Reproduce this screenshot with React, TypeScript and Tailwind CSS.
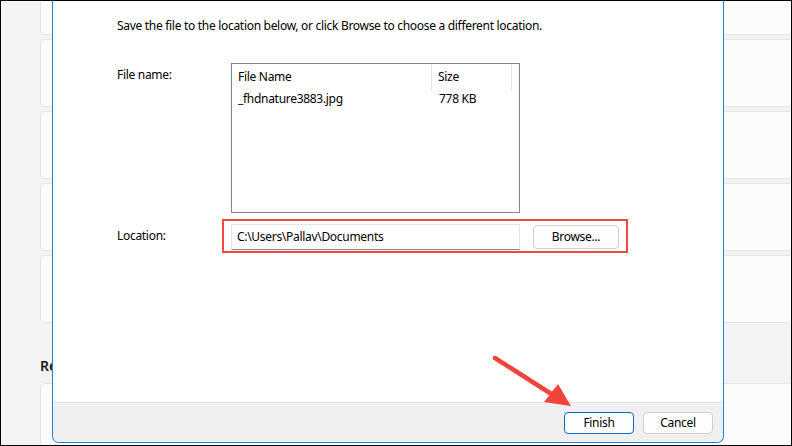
function BackgroundCards() {
  return (
    <div className="flex w-[820px] flex-col pl-[39px]">
      <div className="-mt-[34px] h-[68px] rounded-[5px] border border-[#e5e5e5] bg-[#fbfbfb]" />
      <div className="mt-[4px] h-[68px] rounded-[5px] border border-[#e5e5e5] bg-[#fbfbfb]" />
      <div className="mt-[4px] h-[68px] rounded-[5px] border border-[#e5e5e5] bg-[#fbfbfb]" />
      <div className="mt-[4px] h-[68px] rounded-[5px] border border-[#e5e5e5] bg-[#fbfbfb]" />
      <div className="mt-[4px] h-[68px] rounded-[5px] border border-[#e5e5e5] bg-[#fbfbfb]" />
      <div className="flex h-[60px] items-end pb-[7px] text-[14px] font-semibold leading-[20px] text-[#1b1b1b]">
        Related settings
      </div>
      <div className="h-[80px] rounded-[5px] border border-[#e5e5e5] bg-[#fbfbfb]" />
    </div>
  );
}

function FileList() {
  return (
    <div className="h-[150px] w-[289px] border border-[#82878f] bg-white">
      <div className="flex h-[26px] items-center">
        <div className="flex h-full w-[200px] items-center border-r border-[#e5e5e5] pl-[6px]">File Name</div>
        <div className="flex h-full w-[80px] items-center border-r border-[#e5e5e5] pl-[6px]">Size</div>
      </div>
      <div className="flex h-[18px] items-center">
        <div className="w-[201px] pl-[6px]">_fhdnature3883.jpg</div>
        <div className="pl-[6px]">778 KB</div>
      </div>
    </div>
  );
}

function SaveDialog() {
  return (
    <div className="absolute bottom-[2px] left-[51px] top-0 flex w-[672px] flex-col overflow-hidden rounded-b-[7px] border-x border-b border-[#1883d7] bg-white text-[12px] leading-[16px] tracking-[-0.3px] text-black">
      <div className="flex-1 pl-[64px] pt-[17px]">
        <p>Save the file to the location below, or click Browse to choose a different location.</p>

        <div className="mt-[29px] grid grid-cols-[114px_auto] items-start">
          <div className="pt-[4px]">File name:</div>
          <FileList />
        </div>

        <div className="mt-[6px] grid grid-cols-[114px_auto] items-center">
          <div>Location:</div>
          <div className="-ml-[9px] flex h-[34px] w-[406px] items-start border-2 border-[#f0483e] pl-[7px] pt-[3px]">
            <div className="flex h-[26px] w-[289px] items-center border border-[#e5e5e5] border-b-[#8a8a8a] bg-white pl-[5px]">
              C:\Users\Pallav\Documents
            </div>
            <button className="ml-[13px] mt-[1px] h-[24px] w-[86px] rounded-[4px] border border-[#d0d0d0] bg-[#fdfdfd]">
              Browse...
            </button>
          </div>
        </div>
      </div>

      <div className="flex h-[40px] items-center justify-end gap-[9px] border-t border-[#e1e1e1] bg-[#f0f0f0] pr-[10px]">
        <button className="h-[22px] w-[70px] rounded-[4px] border-[1.5px] border-[#0a6cc4] bg-[#fdfdfd]">Finish</button>
        <button className="h-[22px] w-[70px] rounded-[4px] border border-[#d0d0d0] bg-[#fdfdfd]">Cancel</button>
      </div>
    </div>
  );
}

function Arrow() {
  return (
    <svg className="pointer-events-none absolute left-[-1px] top-[-1px]" width="792" height="446" viewBox="0 0 792 446">
      <line x1="495" y1="358" x2="553" y2="395" stroke="#f0453c" strokeWidth="4.5" strokeLinecap="round" />
      <polygon points="571,406 544,402 558,384" fill="#f0453c" />
    </svg>
  );
}

export default function App() {
  return (
    <div className="relative h-[446px] w-[792px] overflow-hidden border border-black bg-[#f3f3f3] font-['Noto_Sans',sans-serif]">
      <BackgroundCards />
      <SaveDialog />
      <Arrow />
    </div>
  );
}
